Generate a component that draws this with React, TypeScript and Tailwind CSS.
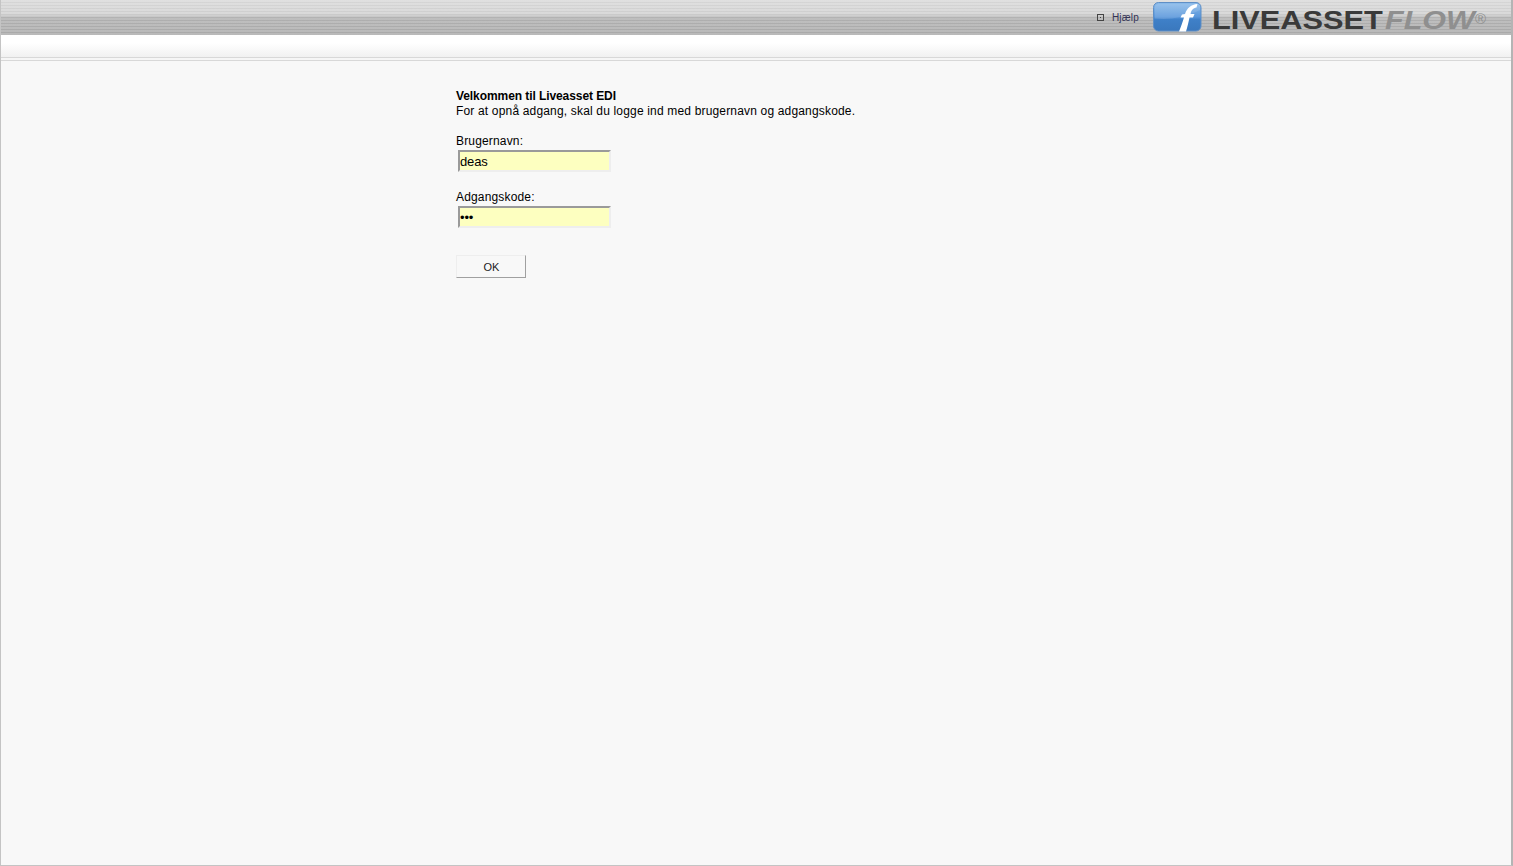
function LogoMark() {
  return (
    <svg width="50" height="31" viewBox="0 0 50 31" className="block -translate-y-[1px]">
      <defs>
        <linearGradient id="logoBlue" x1="0" y1="0" x2="0" y2="1">
          <stop offset="0" stopColor="#8dbcea" />
          <stop offset="0.5" stopColor="#5a97db" />
          <stop offset="0.6" stopColor="#3f80c8" />
          <stop offset="1" stopColor="#3a78bd" />
        </linearGradient>
      </defs>
      <rect x="0.5" y="1.5" width="47.5" height="28.5" rx="5" fill="url(#logoBlue)" stroke="#5f8fc6" />
      <path d="M2 17.5 C 16 19, 30 17, 47 9 L47 5 Q47 3 44 3 L6 3 Q2 3 2 6 Z" fill="#ffffff" opacity="0.12" />
      <path
        d="M26 30.5 C28 26 29.5 21 31 16.5 L27.5 16.5 L29 13.5 L32 13 C34 7 38 3.5 44.5 3 L43.5 6.5 C40 7 38.5 9 37.5 13 L41.5 13 L40 16.5 L36.5 16.5 C35.5 21 34.5 26 33 30.5 Z"
        fill="#ffffff"
      />
    </svg>
  );
}

function Field({ label, value, type }: { label: string; value: string; type: string }) {
  return (
    <div className="flex flex-col">
      <label className="h-[15px] leading-[15px] tracking-[0.16px]">{label}</label>
      <input
        type={type}
        defaultValue={value}
        className="ml-[2px] mt-[1px] h-[22px] w-[153px] border-2 border-t-[#9a9a9a] border-l-[#9a9a9a] border-r-[#eeeeee] border-b-[#eeeeee] bg-[#fdffc0] pl-0 text-[13px] tracking-[-0.15px] text-black outline-none"
      />
    </div>
  );
}

export default function App() {
  return (
    <div className="flex h-[866px] w-full flex-col overflow-hidden border-b border-l border-r-[2px] border-b-[#c4c4c4] border-l-[#c4c4c4] border-r-[#b4b4b4] bg-[#f8f8f8] font-['Liberation_Sans',Arial,sans-serif] text-[12px] text-black">
      <header className="flex h-[35px] shrink-0 items-center justify-end bg-[repeating-linear-gradient(180deg,rgba(255,255,255,0.16)_0px,rgba(255,255,255,0.16)_2px,rgba(0,0,0,0.02)_2px,rgba(0,0,0,0.02)_3px),linear-gradient(180deg,#dadada_0px,#d2d2d2_14px,#b2b2b2_18px,#acacac_35px)] pr-[24px]">
        <span className="mr-[8px] flex h-[7px] w-[7px] items-center justify-center border border-[#444444]">
          <span className="h-[1px] w-[1px] bg-[#444444]" />
        </span>
        <a className="mr-[14px] text-[10px] tracking-[0.2px] text-[#333355]">Hjælp</a>
        <LogoMark />
        <div className="ml-[9px] flex w-[275px] items-baseline whitespace-nowrap pt-[8px] font-bold">
          <span className="w-[173px] origin-left scale-x-[1.23] text-[25px] leading-[27px] text-[#3a3a3a]">LIVEASSET</span>
          <span className="w-[90px] origin-left scale-x-[1.22] text-[25px] italic leading-[27px] text-[#8f8f8f]">FLOW</span>
          <span className="-translate-y-[5px] text-[15px] font-normal leading-[27px] text-[#8f8f8f]">®</span>
        </div>
      </header>
      <div className="h-[22px] shrink-0 bg-[linear-gradient(180deg,#ffffff_0px,#ffffff_8px,#f1f1f1_22px)]" />
      <div className="h-[4px] shrink-0 border-y border-y-[#d8d8d8] bg-[#f6f6f6]" />
      <main className="ml-[455px] flex flex-col pt-[28px]">
        <p className="h-[15px] font-bold leading-[15px] tracking-[-0.08px]">Velkommen til Liveasset EDI</p>
        <p className="h-[15px] leading-[15px] tracking-[0.17px]">For at opnå adgang, skal du logge ind med brugernavn og adgangskode.</p>
        <div className="mt-[15px] flex flex-col gap-[18px]">
          <Field label="Brugernavn:" value="deas" type="text" />
          <Field label="Adgangskode:" value="abc" type="password" />
        </div>
        <button className="mt-[27px] h-[23px] w-[70px] border border-t-[#eeeeee] border-l-[#eeeeee] border-r-[#a0a0a0] border-b-[#a0a0a0] bg-[#f8f8f8] pl-[1px] pt-[1px] text-[11px] text-[#222222]">
          OK
        </button>
      </main>
    </div>
  );
}
